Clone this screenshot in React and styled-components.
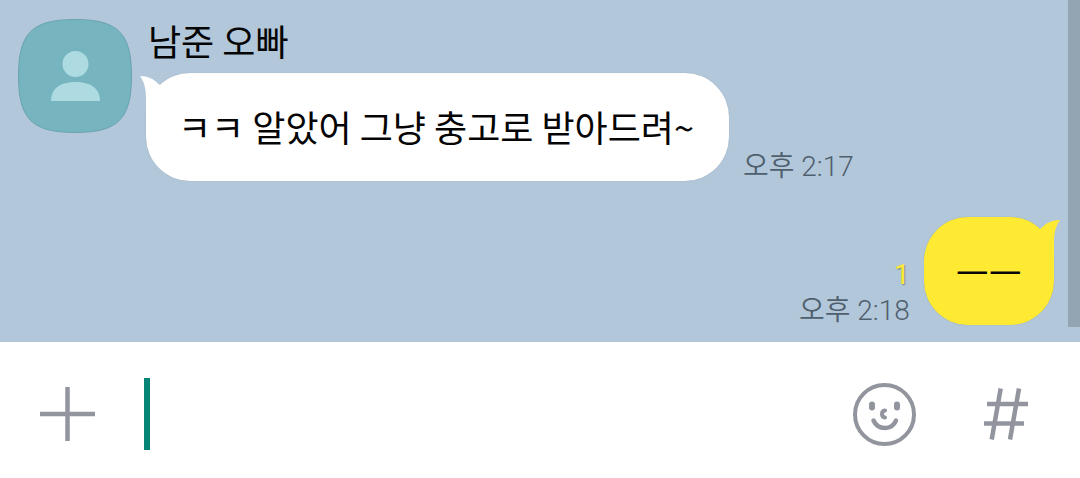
import React from 'react';
import styled, { createGlobalStyle } from 'styled-components';

const GlobalStyle = createGlobalStyle`
  * { box-sizing: border-box; }
  body {
    margin: 0;
    background: #ffffff;
    font-family: "Noto Sans CJK KR", "Noto Sans", sans-serif;
  }
`;

const Screen = styled.main`
  display: flex;
  flex-direction: column;
`;

const Chat = styled.section`
  display: flex;
  background: #b2c7da;
`;

const Messages = styled.div`
  flex: 1;
  display: flex;
  flex-direction: column;
  gap: 36px;
  padding: 19px 14px 17px 18px;
`;

const ScrollThumb = styled.div`
  width: 12px;
  margin-bottom: 15px;
  background: #93a4b3;
`;

const Message = styled.article`
  display: flex;
  align-items: ${({ $mine }) => ($mine ? 'flex-end' : 'flex-start')};
  justify-content: ${({ $mine }) => ($mine ? 'flex-end' : 'flex-start')};
  gap: 14px;
`;

const AvatarButton = styled.button`
  display: block;
  padding: 0;
  border: 0;
  background: none;

  svg { display: block; }
`;

const Sender = styled.h2`
  margin: 0 0 12px;
  padding-left: 2px;
  font-size: 36px;
  font-weight: 400;
  line-height: 42px;
  color: #050505;
`;

const BubbleLine = styled.div`
  display: flex;
  align-items: flex-end;
  gap: 14px;
`;

const Bubble = styled.p`
  position: relative;
  margin: 0;
  padding: ${({ $mine }) => ($mine ? '28px 32px' : '27px 35px 29px 32px')};
  border-radius: 44px;
  background: ${({ $mine }) => ($mine ? '#ffea33' : '#ffffff')};
  box-shadow: 0 0 1px rgba(80, 95, 110, 0.4);
  color: #050505;
  font-size: 36px;
  line-height: 52px;
`;

const Tail = styled.svg`
  position: absolute;
  top: 3px;
  ${({ $mine }) => ($mine ? 'right: -6px; transform: scaleX(-1);' : 'left: -6px;')}
  fill: ${({ $mine }) => ($mine ? '#ffea33' : '#ffffff')};
`;

const Meta = styled.div`
  display: flex;
  flex-direction: column;
  align-items: flex-end;
  gap: 8px;
  font-family: Roboto, "Noto Sans CJK KR", sans-serif;
  font-size: 28px;
  font-weight: 350;
  line-height: 28px;
`;

const Time = styled.time`
  color: #4f5f6e;
`;

const Unread = styled.span`
  color: #ffea33;
  font-weight: 400;
  text-shadow: 1px 1px 1px rgba(70, 80, 60, 0.5);
`;

const Composer = styled.form`
  display: flex;
  align-items: center;
  height: 136px;
  padding: 8px 50px 0 38px;
`;

const IconButton = styled.button`
  display: flex;
  padding: 0;
  border: 0;
  background: none;
  color: #92959e;
`;

const Field = styled.label`
  flex: 1;
  display: flex;
  align-items: center;
  min-width: 0;
  margin: 0 24px 0 48px;
`;

const Caret = styled.span`
  width: 6px;
  height: 72px;
  background: #078676;
`;

const TextInput = styled.input`
  flex: 1;
  min-width: 0;
  height: 72px;
  padding: 0;
  border: 0;
  outline: 0;
  background: transparent;
  font: inherit;
  font-size: 36px;
`;

const Tools = styled.div`
  display: flex;
  gap: 66px;
`;

function Avatar() {
  return (
    <AvatarButton type="button" aria-label="남준 오빠">
      <svg width="114" height="114" viewBox="0 0 114 114">
        <path
          d="M57 .5C100 .5 113.500 14 113.500 57S100 113.500 57 113.500S.5 100 .5 57S14 .5 57 .5Z"
          fill="#76b4bf"
          stroke="#6aa4b1"
        />
        <circle cx="57.500" cy="45" r="13" fill="#addbe1" />
        <path d="M33 82C33 69 43 63 57.500 63S82 69 82 82Z" fill="#addbe1" />
      </svg>
    </AvatarButton>
  );
}

function BubbleTail({ mine }) {
  return (
    <Tail $mine={mine} width="32" height="40" viewBox="0 0 32 40" aria-hidden="true">
      <path d="M0 0C8 0 14 3 18.500 8L30 14L14 40H6V24C6 14 5 7 0 0Z" />
    </Tail>
  );
}

export default function App() {
  return (
    <Screen>
      <GlobalStyle />
      <Chat>
        <Messages>
          <Message>
            <Avatar />
            <div>
              <Sender>남준 오빠</Sender>
              <BubbleLine>
                <Bubble>
                  <BubbleTail />
                  ㅋㅋ 알았어 그냥 충고로 받아드려~
                </Bubble>
                <Meta>
                  <Time>오후 2:17</Time>
                </Meta>
              </BubbleLine>
            </div>
          </Message>
          <Message $mine>
            <Meta>
              <Unread>1</Unread>
              <Time>오후 2:18</Time>
            </Meta>
            <Bubble $mine>
              <BubbleTail mine />
              ㅡㅡ
            </Bubble>
          </Message>
        </Messages>
        <ScrollThumb />
      </Chat>
      <Composer onSubmit={(event) => event.preventDefault()}>
        <IconButton type="button" aria-label="추가">
          <svg width="58" height="58" viewBox="0 0 58 58" fill="none" stroke="currentColor" strokeWidth="4.500">
            <path d="M2 29H57M29.500 2V56" />
          </svg>
        </IconButton>
        <Field>
          <Caret />
          <TextInput type="text" aria-label="메시지 입력" />
        </Field>
        <Tools>
          <IconButton type="button" aria-label="이모티콘">
            <svg width="64" height="64" viewBox="0 0 64 64" fill="none" stroke="currentColor" strokeWidth="4" strokeLinecap="round">
              <circle cx="32.500" cy="32.500" r="29.500" />
              <path d="M20 22.500V25.500M45 22.500V25.500" strokeWidth="6" />
              <path d="M33 28.500C29 29 29 35 33 35.500" />
              <path d="M21.500 38.500C26 48.500 40 48.500 44 38.500" strokeWidth="4.500" />
            </svg>
          </IconButton>
          <IconButton type="button" aria-label="샵 검색">
            <svg width="48" height="64" viewBox="0 0 48 64" fill="none" stroke="currentColor" strokeWidth="4.500">
              <path d="M18.700 6.500L9.700 57.500M37 6.500L28 57.500M5 22H46M2 41.500H42" />
            </svg>
          </IconButton>
        </Tools>
      </Composer>
    </Screen>
  );
}
